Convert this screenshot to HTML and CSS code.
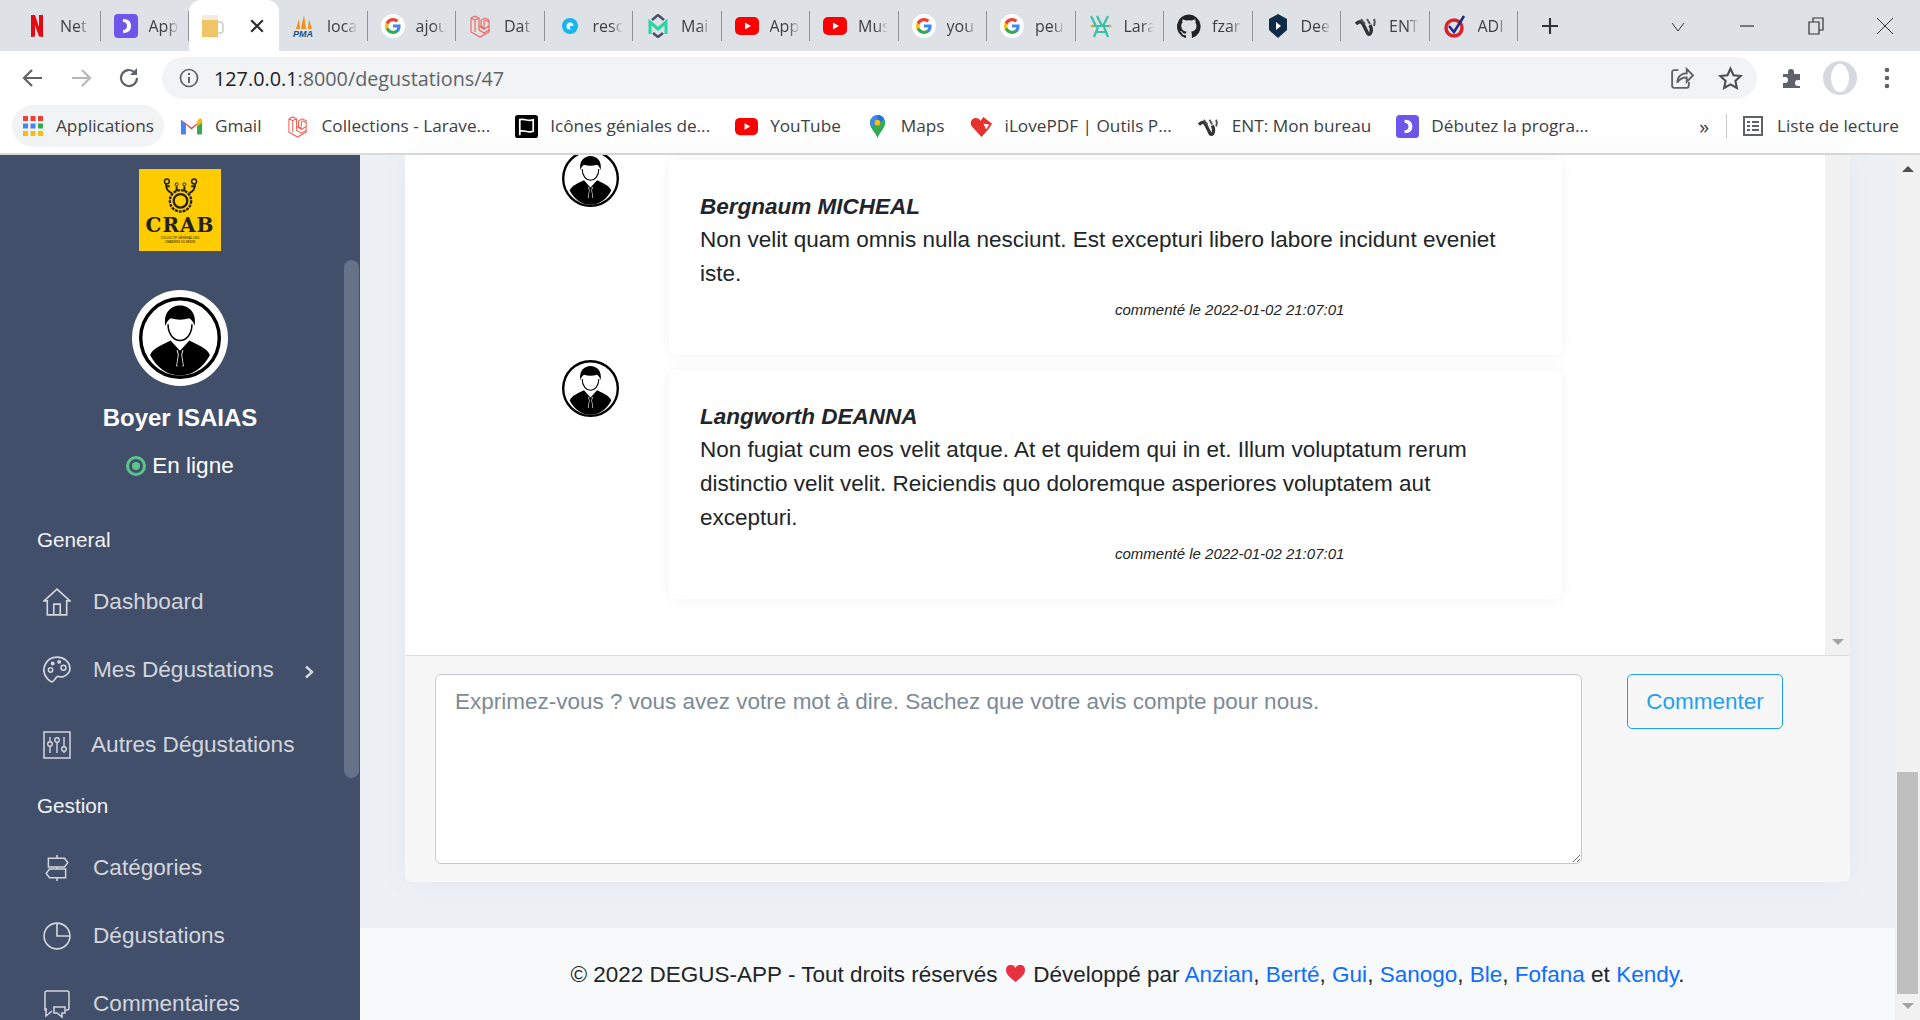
FILE: index.html
```html
<!DOCTYPE html>
<html lang="fr">
<head>
<meta charset="UTF-8">
<meta name="viewport" content="width=device-width, initial-scale=1.0">
<title>DEGUS-APP</title>
<link rel="stylesheet" href="styles.css">
</head>
<body>

<!-- shared icons -->
<svg class="sprites" width="0" height="0">
    <symbol id="i-person" viewBox="0 0 96 96">
        <circle cx="48" cy="48" r="46" fill="#fff" stroke="#000" stroke-width="4"/>
        <path d="M13 68C17 59 28 56 37 51L48 63 59 51C68 56 79 59 83 68 76 82 63 92 48 92S20 82 13 68z" fill="#000"/>
        <path d="M44 62l4 2 4-2-1.500 6 2 13H43.500l2-13z" fill="#fff"/>
        <path d="M45.500 63h5l-1 5 2 12-3.500 3-3.500-3 2-12z" fill="#000"/>
        <path d="M31 34C28 18 38 10 48 10S68 18 65 34C64 30 62 27 59 25 52 27 44 27 37 25 34 27 32 30 31 34z" fill="#000"/>
        <path d="M34 32C34 44 41 51 48 51S62 44 62 32" fill="none" stroke="#000" stroke-width="1.800"/>
    </symbol>
    <symbol id="i-laravel" viewBox="0 0 24 24">
        <path d="M2 4l4-2 4 2v12l5 3 5-3v-4l-5 3-5-3V4m-8 0v14l9 5 9-5V6l-4-2-4 2v6l4 2m0-8l4 2M15 6v6M2 4l4 2 4-2M6 6v12" fill="none" stroke="#f0625a" stroke-width="1.100"/>
    </symbol>
    <symbol id="i-youtube" viewBox="0 0 24 24">
        <rect x="0" y="3" width="24" height="18" rx="5" fill="#f00"/>
        <path d="M10 8.500v7l6-3.500z" fill="#fff"/>
    </symbol>
    <symbol id="i-google" viewBox="0 0 24 24">
        <circle cx="12" cy="12" r="12" fill="#fff"/>
        <path d="M19.600 12.200c0-.6-.1-1.100-.2-1.600H12v3h4.300c-.2 1-.8 1.900-1.600 2.400v2h2.600c1.500-1.400 2.300-3.400 2.300-5.800z" fill="#4285f4"/>
        <path d="M12 20c2.200 0 4-.7 5.300-2l-2.600-2c-.7.500-1.600.8-2.700.8-2.100 0-3.900-1.400-4.500-3.300H4.800v2.100C6.100 18.200 8.900 20 12 20z" fill="#34a853"/>
        <path d="M7.500 13.500c-.3-1-.3-2 0-3V8.400H4.800c-1 2-1 5.200 0 7.200z" fill="#fbbc05"/>
        <path d="M12 7.200c1.200 0 2.300.4 3.100 1.200l2.300-2.300C16 4.800 14.200 4 12 4 8.900 4 6.100 5.800 4.800 8.400l2.700 2.100C8.100 8.600 9.900 7.200 12 7.200z" fill="#ea4335"/>
    </symbol>
    <symbol id="i-purple" viewBox="0 0 24 24">
        <rect x="0" y="0" width="24" height="24" rx="4" fill="#6f56ea"/>
        <path d="M9 5c6 0 8 3 8 7s-2 7-8 7v-3c3 0 4-2 4-4s-1-4-4-4z" fill="#fff"/>
    </symbol>
    <symbol id="i-ent" viewBox="0 0 24 24">
        <path d="M2 10c3-3 5-3 7 0l4 8c1 3 3 3 4 0 1-3 0-5-1-7" fill="none" stroke="#333" stroke-width="3.400"/>
        <path d="M7 5l4 5M13 5l3 5M20 5c1 2 1 4 0 7" fill="none" stroke="#555" stroke-width="2"/>
    </symbol>
</svg>

<header class="chrome">
    <div class="tabstrip">
        <div class="tab"><svg class="fav" viewBox="0 0 24 24"><path d="M6 1h4l4 12V1h4v22l-4-.5L10 11v11.500l-4 .5z" fill="#e50914"/></svg><span class="tab-label">Net</span></div>
        <div class="tab"><svg class="fav"><use href="#i-purple"/></svg><span class="tab-label">App</span></div>
        <div class="tab tab-active">
            <svg class="fav" viewBox="0 0 24 24"><path d="M2 3h16v20H2z" fill="#f0c566"/><path d="M2 1h16v5H2z" fill="#efece2"/><path d="M18 8h2a3 3 0 0 1 3 3v5a3 3 0 0 1-3 3h-2" fill="none" stroke="#cfcfc6" stroke-width="1.500"/></svg>
            <svg class="tab-close" viewBox="0 0 12 12"><path d="M1 1l10 10M11 1L1 11" stroke="#2b2b2b" stroke-width="1.800"/></svg>
        </div>
        <div class="tab"><svg class="fav" viewBox="0 0 24 24"><path d="M12 1l2 14H9zM7 5l1 10H4zM17 5l3 10h-4z" fill="#f29111"/><text x="1" y="23" font-size="9" font-weight="700" font-style="italic" fill="#24508a" font-family="Liberation Sans, sans-serif">PMA</text></svg><span class="tab-label">loca</span></div>
        <div class="tab"><svg class="fav"><use href="#i-google"/></svg><span class="tab-label">ajou</span></div>
        <div class="tab"><svg class="fav"><use href="#i-laravel"/></svg><span class="tab-label">Dat</span></div>
        <div class="tab"><svg class="fav" viewBox="0 0 24 24"><circle cx="12" cy="12" r="8" fill="#19b5ee"/><circle cx="12" cy="12" r="3.500" fill="#fff"/><path d="M12 12h7v3h-7z" fill="#19b5ee"/></svg><span class="tab-label">resc</span></div>
        <div class="tab"><svg class="fav" viewBox="0 0 24 24"><path d="M4 20V8l8 7 8-7v12" fill="none" stroke="#26d6a4" stroke-width="3"/><path d="M6 6l6-5 6 5M7 19l5 4 5-4" fill="none" stroke="#44536b" stroke-width="2.500"/></svg><span class="tab-label">Mai</span></div>
        <div class="tab"><svg class="fav"><use href="#i-youtube"/></svg><span class="tab-label">App</span></div>
        <div class="tab"><svg class="fav"><use href="#i-youtube"/></svg><span class="tab-label">Mus</span></div>
        <div class="tab"><svg class="fav"><use href="#i-google"/></svg><span class="tab-label">you</span></div>
        <div class="tab"><svg class="fav"><use href="#i-google"/></svg><span class="tab-label">peu</span></div>
        <div class="tab"><svg class="fav" viewBox="0 0 24 24"><path d="M2 2l5 10M8 2l5 10M14 12l5-10M4 12h16M5 23l4-10M19 23l-4-10M6 18h12" fill="none" stroke="#3bbfa5" stroke-width="2.200"/><path d="M1 12l3-2v4zM23 12l-3-2v4z" fill="#f0a35a"/></svg><span class="tab-label">Lara</span></div>
        <div class="tab"><svg class="fav" viewBox="0 0 24 24"><path d="M12 .5a12 12 0 0 0-3.800 23.400c.6.100.8-.3.800-.6v-2.100c-3.300.7-4-1.600-4-1.600-.6-1.400-1.400-1.800-1.400-1.800-1.100-.7.100-.7.100-.7 1.200.1 1.800 1.200 1.800 1.200 1.100 1.800 2.800 1.300 3.500 1 .1-.8.400-1.300.8-1.600-2.700-.3-5.500-1.300-5.500-5.900 0-1.300.5-2.400 1.200-3.200-.1-.3-.5-1.500.1-3.200 0 0 1-.3 3.300 1.200a11.500 11.500 0 0 1 6 0c2.300-1.500 3.300-1.200 3.300-1.200.6 1.700.2 2.900.1 3.200.8.800 1.200 1.900 1.200 3.200 0 4.600-2.800 5.600-5.500 5.900.4.400.8 1.100.8 2.200v3.300c0 .3.200.7.800.6A12 12 0 0 0 12 .5z" fill="#222"/></svg><span class="tab-label">fzar</span></div>
        <div class="tab"><svg class="fav" viewBox="0 0 24 24"><path d="M12 0l9 5v11l-9 8-9-8V5z" fill="#0f2b46"/><path d="M10 8l5 4-5 4z" fill="#fff"/></svg><span class="tab-label">Dee</span></div>
        <div class="tab"><svg class="fav"><use href="#i-ent"/></svg><span class="tab-label">ENT</span></div>
        <div class="tab"><svg class="fav" viewBox="0 0 24 24"><circle cx="11" cy="14" r="8" fill="none" stroke="#d8232a" stroke-width="3.500"/><path d="M6 12l5 6L21 2" fill="none" stroke="#1b2a8a" stroke-width="2.500"/></svg><span class="tab-label">ADI</span></div>
        <svg class="newtab" viewBox="0 0 20 20"><path d="M10 2v16M2 10h16" stroke="#333" stroke-width="2.200"/></svg>
        <div class="window-btns">
            <svg viewBox="0 0 20 20"><path d="M4 7l6 8 6-8" fill="none" stroke="#333" stroke-width="1"/></svg>
            <svg viewBox="0 0 20 20"><path d="M3 10h14" stroke="#333" stroke-width="1.200"/></svg>
            <svg viewBox="0 0 20 20"><path d="M3 6h10v12H3zM7 6V2h10v12h-4" fill="none" stroke="#333" stroke-width="1.200"/></svg>
            <svg viewBox="0 0 20 20"><path d="M2 2l16 16M18 2L2 18" stroke="#333" stroke-width="1"/></svg>
        </div>
    </div>

    <div class="toolbar">
        <svg class="tool" viewBox="0 0 24 24"><path d="M21 12H4m7-8l-8 8 8 8" fill="none" stroke="#5f6368" stroke-width="2.200"/></svg>
        <svg class="tool" viewBox="0 0 24 24"><path d="M3 12h17m-7-8l8 8-8 8" fill="none" stroke="#b5b8bd" stroke-width="2.200"/></svg>
        <svg class="tool" viewBox="0 0 24 24"><path d="M20 12a8 8 0 1 1-2.500-5.800" fill="none" stroke="#5f6368" stroke-width="2.200"/><path d="M20 2v7h-7z" fill="#5f6368"/></svg>
        <div class="omnibox">
            <svg class="omni-info" viewBox="0 0 20 20"><circle cx="10" cy="10" r="8.500" fill="none" stroke="#5f6368" stroke-width="1.700"/><path d="M10 9v6M10 5v2" stroke="#5f6368" stroke-width="2"/></svg>
            <span class="url"><b>127.0.0.1</b>:8000/degustations/47</span>
            <svg class="omni-act" viewBox="0 0 24 24"><path d="M9 4H5a2 2 0 0 0-2 2v13a2 2 0 0 0 2 2h12a2 2 0 0 0 2-2v-4" fill="none" stroke="#5f6368" stroke-width="1.800"/><path d="M8 16c0-6 4-9 9-9V3l6 6-6 6v-4c-4 0-7 1-9 5z" fill="none" stroke="#5f6368" stroke-width="1.800"/></svg>
            <svg class="omni-act" viewBox="0 0 24 24"><path d="M12 2.500l2.900 6.300 6.900.8-5.100 4.700 1.400 6.800-6.100-3.500-6.100 3.500 1.400-6.800-5.100-4.700 6.900-.8z" fill="none" stroke="#4a4d52" stroke-width="2"/></svg>
        </div>
        <svg class="tool-puzzle" viewBox="0 0 24 24"><path d="M3 8h5V6a3 3 0 0 1 6 0v2h6v6h-2a3 3 0 0 0 0 6h2v2H3v-5h2a3 3 0 0 0 0-6H3z" fill="#5f6368"/></svg>
        <div class="profile"><span class="profile-in"></span></div>
        <svg class="tool-dots" viewBox="0 0 6 24"><circle cx="3" cy="4" r="2.300" fill="#5f6368"/><circle cx="3" cy="12" r="2.300" fill="#5f6368"/><circle cx="3" cy="20" r="2.300" fill="#5f6368"/></svg>
    </div>

    <div class="bookmarks">
        <div class="bm bm-apps">
            <svg class="bm-grid" viewBox="0 0 20 20"><g fill="#ea4335"><rect x="0" y="0" width="5" height="5"/><rect x="7.500" y="0" width="5" height="5"/><rect x="15" y="0" width="5" height="5"/></g><g fill="#4285f4"><rect x="0" y="7.500" width="5" height="5"/><rect x="7.500" y="7.500" width="5" height="5"/></g><rect x="15" y="7.500" width="5" height="5" fill="#34a853"/><g fill="#fbbc05"><rect x="0" y="15" width="5" height="5"/><rect x="7.500" y="15" width="5" height="5"/><rect x="15" y="15" width="5" height="5"/></g></svg>
            <span>Applications</span>
        </div>
        <div class="bm"><svg class="bm-ico" viewBox="0 0 24 24"><path d="M1 5l11 8 11-8v15h-5V10l-6 5-6-5v10H1z" fill="#ea4335"/><path d="M1 5v15h5V9z" fill="#4285f4"/><path d="M23 5v15h-5V9z" fill="#34a853"/><path d="M18 6l3-3 2 2v3l-5 4z" fill="#fbbc05"/></svg><span>Gmail</span></div>
        <div class="bm"><svg class="bm-ico"><use href="#i-laravel"/></svg><span>Collections - Larave...</span></div>
        <div class="bm"><svg class="bm-ico" viewBox="0 0 24 24"><rect width="24" height="24" rx="3" fill="#000"/><path d="M5 4v17M5 5c4-2 8 2 14 0v12c-6 2-10-2-14 0" fill="none" stroke="#fff" stroke-width="1.800"/></svg><span>Icônes géniales de...</span></div>
        <div class="bm"><svg class="bm-ico"><use href="#i-youtube"/></svg><span>YouTube</span></div>
        <div class="bm"><svg class="bm-ico" viewBox="0 0 24 24"><path d="M12 0a8 8 0 0 1 8 8c0 6-6 10-8 16-2-6-8-10-8-16a8 8 0 0 1 8-8z" fill="#34a853"/><path d="M6 3a8 8 0 0 1 11-1l-9 10-4-2z" fill="#4285f4"/><path d="M12 0a8 8 0 0 1 7 4l-4 4-3-3z" fill="#1a73e8"/><circle cx="12" cy="8" r="3" fill="#fbbc05"/></svg><span>Maps</span></div>
        <div class="bm"><svg class="bm-ico" viewBox="0 0 24 24"><path d="M12 23L2 12c-3-4 0-9 4-9 2 0 4 1 5 3l3-4 9 7-4 6z" fill="#e5322d"/><path d="M14 9l6 1-3 5z" fill="#fff"/></svg><span>iLovePDF | Outils P...</span></div>
        <div class="bm"><svg class="bm-ico"><use href="#i-ent"/></svg><span>ENT: Mon bureau</span></div>
        <div class="bm"><svg class="bm-ico"><use href="#i-purple"/></svg><span>Débutez la progra...</span></div>
        <div class="bm-end">
            <span class="bm-more">»</span>
            <span class="bm-sep"></span>
            <svg class="bm-list" viewBox="0 0 20 20"><rect x="1" y="1" width="18" height="18" fill="none" stroke="#5f6368" stroke-width="2"/><path d="M4 6h3M9 6h7M4 10h3M9 10h7M4 14h3M9 14h7" stroke="#5f6368" stroke-width="1.800"/></svg>
            <span>Liste de lecture</span>
        </div>
    </div>
</header>

<div class="app">
    <aside class="sidebar">
        <div class="logo-wrap">
            <div class="logo">
                <svg class="logo-mark" viewBox="0 0 36 38">
                    <circle cx="18" cy="24" r="11" fill="none" stroke="#222" stroke-width="2.400" stroke-dasharray="3 1"/>
                    <circle cx="18" cy="24" r="7" fill="none" stroke="#222" stroke-width="2.400"/>
                    <path d="M3 6c0 6 2 8 6 10M33 6c0 6-2 8-6 10M14 9v5M22 9v5M3 9h4M33 9h-4" fill="none" stroke="#222" stroke-width="2"/>
                    <circle cx="4" cy="4" r="2.500" fill="none" stroke="#222" stroke-width="1.500"/><circle cx="32" cy="4" r="2.500" fill="none" stroke="#222" stroke-width="1.500"/>
                    <circle cx="14" cy="7" r="1.500" fill="none" stroke="#222"/><circle cx="22" cy="7" r="1.500" fill="none" stroke="#222"/>
                </svg>
                <div class="logo-name">CRAB</div>
                <div class="logo-sub">COLLECTIF GÉNÉRAL DES<br>CRABIENS DU BÉNIN</div>
            </div>
        </div>
        <div class="side-scroll">
            <div class="side-thumb"></div>
            <div class="profile-card">
                <span class="big-avatar"><svg><use href="#i-person"/></svg></span>
                <div class="profile-name">Boyer ISAIAS</div>
                <div class="status"><span class="status-dot"></span>En ligne</div>
            </div>
            <nav class="nav">
                <div class="nav-label">General</div>
                <div class="nav-item">
                    <svg viewBox="0 0 26 26"><path d="M13 1L1 12h3v13h18V12h3zM10 25V15h6v10" fill="none" stroke="currentColor" stroke-width="1.500"/></svg>
                    Dashboard
                </div>
                <div class="nav-item nav-item-sub">
                    <svg viewBox="0 0 26 26"><path d="M13 1a12 12 0 0 0-9 20c1.500 1.500 3 3 4.500 3 2 0 3-5 5.500-5 2 0 3 1 5 0 3-1 6-4 6-7C25 5 19 1 13 1z" fill="none" stroke="currentColor" stroke-width="1.600"/><circle cx="7" cy="13" r="2" fill="none" stroke="currentColor" stroke-width="1.400"/><circle cx="9" cy="7" r="1.800" fill="currentColor"/><circle cx="15" cy="5.500" r="1.800" fill="currentColor"/><circle cx="19" cy="11" r="2.300" fill="none" stroke="currentColor" stroke-width="1.400"/></svg>
                    Mes Dégustations
                    <svg class="nav-arrow" viewBox="0 0 10 14"><path d="M2 1.500L8 7l-6 5.500" fill="none" stroke="currentColor" stroke-width="2.400"/></svg>
                </div>
                <div class="nav-item nav-item-tight">
                    <svg viewBox="0 0 28 28"><rect x="1" y="1" width="26" height="26" fill="none" stroke="currentColor" stroke-width="1.500"/><path d="M7 6v16M14 6v16M21 6v16" stroke="currentColor" stroke-width="1.400"/><circle cx="7" cy="13" r="2.300" fill="#414f6b" stroke="currentColor" stroke-width="1.400"/><circle cx="14" cy="9" r="2.300" fill="#414f6b" stroke="currentColor" stroke-width="1.400"/><circle cx="21" cy="18" r="2.300" fill="#414f6b" stroke="currentColor" stroke-width="1.400"/></svg>
                    Autres Dégustations
                </div>
                <div class="nav-label">Gestion</div>
                <div class="nav-item">
                    <svg viewBox="0 0 26 26"><path d="M13 1v3M13 12v2M13 22v3M5 4h15l3 4-3 4H5zM21 14H6l-3 4 3 4h15z" fill="none" stroke="currentColor" stroke-width="1.400"/></svg>
                    Catégories
                </div>
                <div class="nav-item">
                    <svg viewBox="0 0 26 26"><circle cx="13" cy="13" r="12" fill="none" stroke="currentColor" stroke-width="1.500"/><path d="M13 1v12h12" fill="none" stroke="currentColor" stroke-width="1.500"/></svg>
                    Dégustations
                </div>
                <div class="nav-item">
                    <svg viewBox="0 0 28 28"><path d="M4 20H2V3a2 2 0 0 1 2-2h20a2 2 0 0 1 2 2v15a2 2 0 0 1-2 2h-1M3 18v8l6-5" fill="none" stroke="currentColor" stroke-width="1.500"/><path d="M11 17h11v6h-3v4l-5-4h-3z" fill="none" stroke="currentColor" stroke-width="1.500"/></svg>
                    Commentaires
                </div>
            </nav>
        </div>
    </aside>

    <main class="main">
        <div class="page">
            <section class="card">
                <div class="chat">
                    <div class="chat-list">
                        <article class="comment">
                            <span class="avatar"><svg><use href="#i-person"/></svg></span>
                            <div class="bubble">
                                <h4 class="author">Bergnaum MICHEAL</h4>
                                <p class="comment-text">Non velit quam omnis nulla nesciunt. Est excepturi libero labore incidunt eveniet iste.</p>
                                <div class="comment-date">commenté le 2022-01-02 21:07:01</div>
                            </div>
                        </article>
                        <article class="comment">
                            <span class="avatar"><svg><use href="#i-person"/></svg></span>
                            <div class="bubble">
                                <h4 class="author">Langworth DEANNA</h4>
                                <p class="comment-text">Non fugiat cum eos velit atque. At et quidem qui in et. Illum voluptatum rerum distinctio velit velit. Reiciendis quo doloremque asperiores voluptatem aut excepturi.</p>
                                <div class="comment-date">commenté le 2022-01-02 21:07:01</div>
                            </div>
                        </article>
                    </div>
                    <div class="chat-scroll"><span class="arrow-down"></span></div>
                </div>
                <form class="comment-form">
                    <textarea class="comment-input" placeholder="Exprimez-vous ? vous avez votre mot à dire. Sachez que votre avis compte pour nous."></textarea>
                    <button type="button" class="btn-comment">Commenter</button>
                </form>
            </section>
            <footer class="footer">© 2022 DEGUS-APP - Tout droits réservés <svg class="heart" viewBox="0 0 20 18"><path d="M10 18C4 13 0 10 0 5.500A5.200 5.200 0 0 1 10 3.200 5.200 5.200 0 0 1 20 5.500C20 10 16 13 10 18z"/></svg> Développé par <a href="#">Anzian</a>, <a href="#">Berté</a>, <a href="#">Gui</a>, <a href="#">Sanogo</a>, <a href="#">Ble</a>, <a href="#">Fofana</a> et <a href="#">Kendy</a>.</footer>
        </div>
        <div class="page-scroll">
            <span class="arrow-up"></span>
            <div class="page-thumb"></div>
            <span class="arrow-down"></span>
        </div>
    </main>
</div>

</body>
</html>
```

FILE: styles.css
```css
* {
    box-sizing: border-box;
}

html, body {
    height: 100%;
}

body {
    margin: 0;
    overflow: hidden;
    font-family: "Liberation Sans", Arial, sans-serif;
    color: #212529;
    display: flex;
    flex-direction: column;
}

.sprites {
    position: absolute;
}

/* browser chrome */
.chrome {
    flex: none;
    font-family: "Open Sans", sans-serif;
    color: #3c4043;
}

.tabstrip {
    height: 51px;
    background: #dee1e6;
    display: flex;
    align-items: center;
    padding-left: 12px;
}

.tab {
    width: 88.5px;
    height: 51px;
    padding-left: 13px;
    display: flex;
    align-items: center;
    gap: 11px;
    overflow: hidden;
    position: relative;
    font-size: 16px;
}

.tab::after {
    content: "";
    position: absolute;
    right: 0;
    top: 11px;
    height: 30px;
    width: 1px;
    background: #8f9296;
}

.tab-active {
    width: 90px;
    background: #fff;
    border-radius: 12px 12px 0 0;
    padding-left: 11px;
    justify-content: space-between;
    padding-right: 15px;
}

.tab-active::after {
    display: none;
}

.fav {
    width: 24px;
    height: 24px;
    flex: none;
}

.tab-label {
    white-space: nowrap;
    width: 30px;
    overflow: hidden;
    -webkit-mask-image: linear-gradient(to right, #000 60%, transparent);
    mask-image: linear-gradient(to right, #000 60%, transparent);
}

.tab-close {
    width: 14px;
    height: 14px;
}

.newtab {
    width: 20px;
    height: 20px;
    margin-left: 22px;
}

.window-btns {
    margin-left: auto;
    display: flex;
    gap: 49px;
    padding-right: 25px;
}

.window-btns svg {
    width: 20px;
    height: 20px;
}

.toolbar {
    height: 54px;
    background: #fff;
    display: flex;
    align-items: center;
    padding-left: 21px;
}

.tool {
    width: 24px;
    height: 24px;
    margin-right: 24px;
}

.omnibox {
    margin-left: -3px;
    width: 1595px;
    height: 42px;
    background: #f1f3f4;
    border-radius: 21px;
    display: flex;
    align-items: center;
    padding: 0 14px 0 17px;
    font-size: 19.800px;
}

.omni-info {
    width: 20px;
    height: 20px;
    margin-right: 15px;
}

.url {
    flex: 1;
    color: #5f6368;
}

.url b {
    font-weight: 400;
    color: #202124;
}

.omni-act {
    width: 25px;
    height: 25px;
    margin-left: 24px;
}

.tool-puzzle {
    width: 24px;
    height: 24px;
    margin-left: 23px;
}

.profile {
    width: 34px;
    height: 34px;
    border-radius: 50%;
    background: #d6dade;
    margin-left: 19px;
    display: flex;
    justify-content: center;
    align-items: center;
}

.profile-in {
    width: 18px;
    height: 28px;
    border-radius: 50%;
    background: #fff;
}

.tool-dots {
    width: 6px;
    height: 24px;
    margin-left: 27px;
}

.bookmarks {
    height: 50px;
    background: #fff;
    border-bottom: 2px solid #d9d9d9;
    display: flex;
    align-items: flex-start;
    padding-left: 12px;
    gap: 25px;
    font-size: 17.200px;
}

.bm {
    height: 42px;
    display: flex;
    align-items: center;
    gap: 12px;
    white-space: nowrap;
}

.bm span {
    margin-top: -2px;
}

.bm-apps {
    background: #f1f3f4;
    border-radius: 21px;
    padding: 0 10px 0 11px;
    gap: 13px;
    margin-right: -9px;
}

.bm-grid {
    width: 20px;
    height: 20px;
}

.bm-ico {
    width: 23px;
    height: 23px;
    flex: none;
}

.bm-end {
    margin-left: auto;
    height: 42px;
    display: flex;
    align-items: center;
    white-space: nowrap;
    padding-right: 21px;
}

.bm-end span:last-child {
    margin-top: -2px;
}

.bm-more {
    font-size: 20px;
    margin-right: 17px;
}

.bm-sep {
    width: 1px;
    height: 24px;
    background: #c8c8c8;
    margin-right: 16px;
}

.bm-list {
    width: 20px;
    height: 20px;
    margin-right: 14px;
}

/* app */
.app {
    flex: 1;
    display: flex;
    min-height: 0;
}

.sidebar {
    width: 360px;
    flex: none;
    background: #414f6b;
    display: flex;
    flex-direction: column;
    overflow: hidden;
}

.logo-wrap {
    height: 105px;
    flex: none;
    padding-top: 14px;
    display: flex;
    justify-content: center;
}

.logo {
    width: 82px;
    height: 82px;
    background: #ffcc00;
    display: flex;
    flex-direction: column;
    align-items: center;
    padding-top: 8px;
    color: #222;
}

.logo-mark {
    width: 35px;
    height: 38px;
}

.logo-name {
    font-family: "DejaVu Serif", serif;
    font-weight: 700;
    font-size: 20px;
    line-height: 21px;
    letter-spacing: 1px;
}

.logo-sub {
    font-size: 3px;
    line-height: 4px;
    text-align: center;
}

.side-scroll {
    flex: 1;
    position: relative;
    min-height: 0;
}

.side-thumb {
    position: absolute;
    right: 1px;
    top: 0;
    width: 15px;
    height: 518px;
    background: #667287;
    border-radius: 8px;
}

.profile-card {
    height: 253px;
    padding-top: 30px;
    text-align: center;
    color: #fff;
}

.big-avatar {
    display: block;
    width: 96px;
    height: 96px;
    margin: 0 auto 15px;
    background: #fff;
    border-radius: 50%;
    padding: 7px;
}

.big-avatar svg {
    width: 82px;
    height: 82px;
    display: block;
}

.profile-name {
    font-size: 24px;
    font-weight: 700;
    line-height: 34px;
}

.status {
    margin-top: 14px;
    font-size: 22.500px;
    line-height: 34px;
    display: flex;
    justify-content: center;
    align-items: center;
    gap: 6px;
}

.status-dot {
    width: 20px;
    height: 20px;
    border-radius: 50%;
    border: 3px solid #5cc48a;
    display: flex;
    justify-content: center;
    align-items: center;
}

.status-dot::before {
    content: "";
    width: 8px;
    height: 8px;
    border-radius: 50%;
    background: #5cc48a;
}

.nav-label {
    height: 30px;
    line-height: 30px;
    padding-left: 37px;
    margin: 12px 0 13px;
    font-size: 20.700px;
    color: #f2f3f5;
}

.nav-item {
    height: 68px;
    display: flex;
    align-items: center;
    padding-left: 43px;
    gap: 22px;
    font-size: 22.600px;
    color: #d3d6dc;
    white-space: nowrap;
}

.nav-item svg {
    width: 28px;
    height: 28px;
    flex: none;
}

.nav-item-sub {
    margin-bottom: 7px;
}

.nav-item-tight {
    gap: 20px;
}

.nav-item .nav-arrow {
    width: 10px;
    height: 14px;
    margin: 4px 0 0 8px;
}

.main {
    flex: 1;
    display: flex;
    min-width: 0;
    background: #edf1f5;
}

.page {
    flex: 1;
    display: flex;
    flex-direction: column;
    min-width: 0;
}

.card {
    margin: 0 45px;
    height: 727px;
    flex: none;
    background: #f7f7f7;
    border-radius: 0 0 6px 6px;
    box-shadow: 0 0 30px rgba(90, 110, 140, .06);
    display: flex;
    flex-direction: column;
}

.chat {
    height: 500px;
    flex: none;
    display: flex;
    background: #fff;
    overflow: hidden;
}

.chat-list {
    flex: 1;
    padding: 0 0 0 157px;
    margin-top: -5px;
}

.comment {
    display: flex;
    align-items: flex-start;
    gap: 50px;
    margin-bottom: 5px;
}

.avatar {
    width: 57px;
    height: 57px;
    flex: none;
}

.avatar svg {
    width: 57px;
    height: 57px;
    display: block;
}

.bubble {
    width: 893px;
    margin-top: 10px;
    padding: 30px 34px 35px 31px;
    background: #fff;
    border-radius: 6px;
    box-shadow: 0 0 14px rgba(0, 0, 0, .05);
}

.author {
    margin: 0;
    font-size: 22.500px;
    font-style: italic;
    font-weight: 700;
    line-height: 33px;
}

.comment-text {
    margin: 0;
    font-size: 22.500px;
    line-height: 34px;
}

.comment-date {
    margin: 9px 0 0 415px;
    font-size: 15px;
    font-style: italic;
    line-height: 20px;
}

.chat-scroll {
    width: 25px;
    flex: none;
    background: #f1f1f1;
    display: flex;
    flex-direction: column;
    justify-content: flex-end;
    align-items: center;
    padding-bottom: 10px;
}

.arrow-down, .arrow-up {
    width: 0;
    height: 0;
    border-left: 6px solid transparent;
    border-right: 6px solid transparent;
}

.arrow-down {
    border-top: 6px solid #a3a3a3;
}

.arrow-up {
    border-bottom: 6px solid #505050;
}

.comment-form {
    flex: 1;
    border-top: 1px solid #dcdcdc;
    padding: 18px 30px;
    display: flex;
    align-items: flex-start;
    gap: 45px;
}

.comment-input {
    width: 1147px;
    height: 190px;
    padding: 10px 19px;
    border: 1px solid #c6cace;
    border-radius: 6px;
    background: #fff;
    font-family: inherit;
    font-size: 22.500px;
    line-height: 34px;
}

.comment-input::placeholder {
    color: #7c8a97;
}

.btn-comment {
    width: 156px;
    height: 55px;
    background: transparent;
    border: 1.5px solid #1da1f2;
    border-radius: 5px;
    color: #1da1f2;
    font-family: inherit;
    font-size: 22.500px;
}

.footer {
    margin-top: 45px;
    flex: 1;
    background: #f8f9fa;
    border-top: 1px solid #eef0f2;
    text-align: center;
    font-size: 22.500px;
    line-height: 93px;
}

.footer a {
    color: #0d6efd;
    text-decoration: none;
}

.heart {
    width: 19px;
    height: 17px;
    fill: #e8313f;
    margin: 0 2px;
}

.page-scroll {
    width: 25px;
    flex: none;
    background: #f1f1f1;
    display: flex;
    flex-direction: column;
    align-items: center;
    padding: 11px 0;
}

.page-thumb {
    width: 21px;
    height: 222px;
    background: #bfbfbf;
    margin-top: auto;
    margin-bottom: 9px;
}
```
